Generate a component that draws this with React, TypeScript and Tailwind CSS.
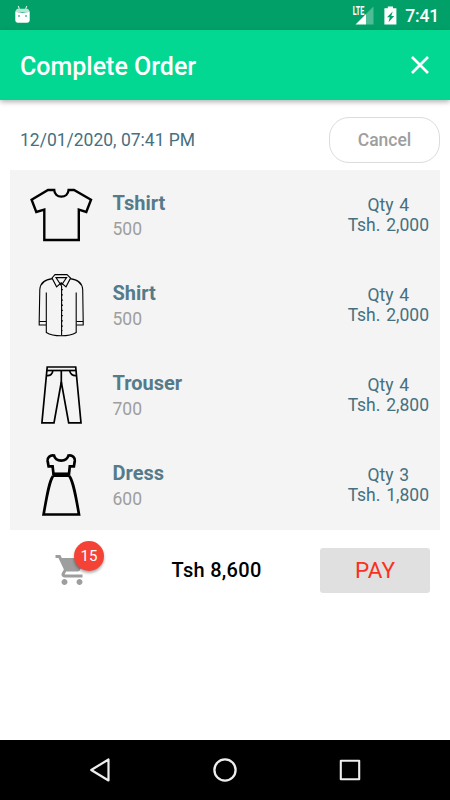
import type { ReactNode } from 'react';

interface OrderItem {
  name: string;
  price: string;
  qty: number;
  total: string;
  icon: ReactNode;
}

const TshirtIcon = () => (
  <svg width="80" height="90" viewBox="0 0 80 90" fill="none" stroke="#000" strokeWidth="2.4">
    <path d="M28 20H34.2C34.5 24 37.5 26.6 41.3 26.6C45.2 26.6 48.2 24 48.6 20H54L71 29.7L66.3 42L58.8 39.7V70H24.3V39.7L16.3 42L11.6 29.7Z" />
  </svg>
);

const ShirtIcon = () => (
  <svg width="80" height="90" viewBox="0 0 80 90" fill="none" stroke="#000" strokeWidth="1.1">
    <path d="M35 14.6H47L50.6 18L46 26.8L41.2 22.8L36.6 26.8L32 18Z" />
    <path d="M36 17.6H46.6L41.2 25.5Z" />
    <path d="M32.5 18.6C24.5 19.5 20.3 23 19.8 29.5L19.2 61.5V65H26" />
    <path d="M50 18.6C58 19.5 62.2 23 62.7 29.5L63.2 61.5V65H56.5" />
    <path d="M19.2 61.5H26M56.5 61.5H63.2" />
    <path d="M26.3 32.5V72.5C30 74.8 35.5 75.8 41.2 75.8C47 75.8 52.5 74.8 56.2 72.5V32.5" />
    <path d="M41.6 26V75.5" />
    <path d="M42 29V71" strokeWidth="1.6" strokeDasharray="1.3 3.9" />
  </svg>
);

const TrouserIcon = () => (
  <svg width="80" height="90" viewBox="0 0 80 90" fill="none" stroke="#000" strokeWidth="1.7">
    <path d="M27.2 17H55.7L61 72.8H48.7L41.3 32L34 72.8H21.9Z" />
    <path d="M27 20.5H56" />
    <path d="M41.3 20.5V34" />
    <path d="M26.7 25.6C30.3 25.9 32.6 24 32.8 20.8" />
    <path d="M56.3 25.6C52.7 25.9 50 24 49.8 20.8" />
  </svg>
);

const DressIcon = () => (
  <svg width="80" height="90" viewBox="0 0 80 90" fill="none" stroke="#000" strokeWidth="2.7">
    <path d="M34 15.5C34.8 18.8 37.5 20.6 41.2 20.6C45 20.6 47.6 18.8 48.5 15.5C52.5 14.7 55.2 17.8 54.8 20.8L53.9 26.4H49.8L49 34H33.5L32.6 26.4H28.6L27.6 20.8C27.2 17.8 30 14.7 34 15.5Z" />
    <path d="M32.6 34.8H49.8" strokeWidth="4.4" />
    <path d="M33 36C29 42 27 55 23.6 74.5H59C55.7 55 53.4 42 49.4 36" />
  </svg>
);

const items: OrderItem[] = [
  { name: 'Tshirt', price: '500', qty: 4, total: '2,000', icon: <TshirtIcon /> },
  { name: 'Shirt', price: '500', qty: 4, total: '2,000', icon: <ShirtIcon /> },
  { name: 'Trouser', price: '700', qty: 4, total: '2,800', icon: <TrouserIcon /> },
  { name: 'Dress', price: '600', qty: 3, total: '1,800', icon: <DressIcon /> },
];

const StatusBar = () => (
  <div className="flex h-[30px] items-center justify-between bg-[#02a069] pl-[15px] pr-[11px] text-white">
    <svg width="15" height="18" viewBox="0 0 15 18" className="mb-[2px]">
      <path d="M3.2 1L4.4 4M11.8 1L10.6 4" stroke="#fff" strokeOpacity=".8" strokeWidth="1.1" />
      <path d="M2.6 3.8H12.4C13.7 4.5 14.5 5.6 14.5 7H.5C.5 5.6 1.3 4.5 2.6 3.8Z" fill="#b9e4d3" />
      <path d="M.3 6.5C3 8 12 8 14.7 6.5V15C14.7 16.8 13.7 17.8 12 17.8H3C1.3 17.8.3 16.8.3 15Z" fill="#fff" />
      <path d="M3 10H5V12H3ZM10 10H12V12H10Z" fill="#7bcdaf" />
    </svg>
    <div className="flex items-center">
      <span className="mr-[-9px] mb-[9px] origin-right scale-x-[0.6] text-[12px] leading-none font-bold">
        LTE
      </span>
      <svg width="19" height="19" viewBox="0 0 19 19">
        <path d="M18.5 0.5V18.5H11V8Z" fill="#fff" fillOpacity=".3" />
        <path d="M11 8V18.5H.5Z" fill="#fff" />
      </svg>
      <svg width="13" height="19" viewBox="0 0 13 19" className="ml-[10px]">
        <path d="M3.8 0.4H9V2.2H12.4V18.6H.4V2.2H3.8Z" fill="#fff" />
        <path d="M8.7 5.4L3 11.2H5.8L4.5 16.2L10.2 9.9H7.3Z" fill="#02a069" />
      </svg>
      <span className="ml-[8px] pt-[2px] text-[17.5px] leading-[28px] font-medium tracking-[-0.2px]">7:41</span>
    </div>
  </div>
);

const Header = () => (
  <header className="flex h-[70px] items-center justify-between bg-[#02d892] pl-5 pr-[21px] text-white shadow-[0_2px_5px_rgba(0,0,0,0.3)]">
    <h1 className="pt-[3px] text-[25px] leading-[30px] font-medium">Complete Order</h1>
    <svg width="18" height="18" viewBox="0 0 18 18" stroke="#fff" strokeWidth="2.6">
      <path d="M1 1L17 17M17 1L1 17" />
    </svg>
  </header>
);

const OrderRow = ({ item }: { item: OrderItem }) => (
  <li className="flex h-[90px] items-center pl-[10px] pr-[11px]">
    {item.icon}
    <div className="ml-[12.5px] flex-1 pt-px">
      <div className="text-[20px] leading-[26px] font-bold text-[#557b8b]">{item.name}</div>
      <div className="text-[17.5px] leading-[26px] text-[#9e9e9e]">{item.price}</div>
    </div>
    <div className="text-center text-[17.5px] leading-5 text-[#46707f] [word-spacing:1.5px]">
      <div>Qty {item.qty}</div>
      <div>Tsh. {item.total}</div>
    </div>
  </li>
);

const OrderFooter = () => (
  <div className="flex h-20 items-center pl-[54px] pr-5">
    <div className="relative">
      <svg width="36" height="36" viewBox="0 0 24 24" fill="#9e9e9e">
        <path d="M7 18c-1.1 0-1.99.9-1.99 2S5.9 22 7 22s2-.9 2-2-.9-2-2-2zM1 2v2h2l3.6 7.59-1.35 2.45c-.16.28-.25.61-.25.96 0 1.1.9 2 2 2h12v-2H7.42c-.14 0-.25-.11-.25-.25l.03-.12.9-1.63h7.45c.75 0 1.41-.41 1.75-1.03l3.58-6.49A1 1 0 0 0 20 4H5.21l-.94-2H1zm16 16c-1.1 0-1.99.9-1.99 2s.89 2 1.99 2 2-.9 2-2-.9-2-2-2z" />
      </svg>
      <span className="absolute top-[-11px] left-5 flex size-[30px] items-center justify-center rounded-full bg-[#f44336] pt-px text-[15px] text-white shadow-[0_2px_3px_rgba(0,0,0,0.35)]">
        15
      </span>
    </div>
    <div className="flex-1 pl-[23px] text-center text-[20px] leading-6 font-medium tracking-[0.3px] text-black">
      Tsh 8,600
    </div>
    <button className="h-[45px] w-[110px] rounded-[3px] bg-[#e0e0e0] pt-[2px] text-[22.5px] text-[#f93022]">PAY</button>
  </div>
);

const NavBar = () => (
  <nav className="flex h-[60px] items-center justify-between bg-black pl-[89px] pr-[88px]">
    <svg width="22" height="26" viewBox="0 0 22 26" fill="none" stroke="#eee" strokeWidth="2.2" strokeLinejoin="round">
      <path d="M19.5 2.5V23.5L2.2 13Z" />
    </svg>
    <svg width="26" height="26" viewBox="0 0 26 26" fill="none" stroke="#eee" strokeWidth="2.3">
      <circle cx="13" cy="13" r="10.6" />
    </svg>
    <svg width="24" height="24" viewBox="0 0 24 24" fill="none" stroke="#eee" strokeWidth="2.1" strokeLinejoin="round">
      <path d="M2.8 2.8H21.2V21.2H2.8Z" />
    </svg>
  </nav>
);

export default function App() {
  return (
    <div className="flex h-[800px] w-[450px] flex-col bg-white font-['Roboto',sans-serif]">
      <StatusBar />
      <Header />
      <main className="flex-1">
        <div className="flex h-[70px] items-center justify-between pt-[10px] pl-5 pr-[10px]">
          <span className="text-[17.5px] text-[#46707f]">12/01/2020, 07:41 PM</span>
          <button className="h-[46px] w-[111px] rounded-[20px] border border-[#dcdcdc] text-[17.5px] font-medium text-[#9e9e9e]">
            Cancel
          </button>
        </div>
        <ul className="mx-[10px] bg-[#f4f4f4]">
          {items.map((item) => (
            <OrderRow key={item.name} item={item} />
          ))}
        </ul>
        <OrderFooter />
      </main>
      <NavBar />
    </div>
  );
}
